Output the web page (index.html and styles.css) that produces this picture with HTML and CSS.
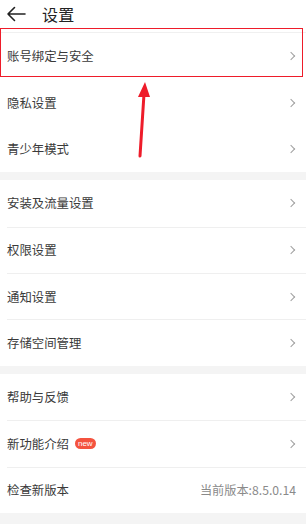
FILE: index.html
```html
<!DOCTYPE html>
<html lang="zh-CN">
<head>
<meta charset="utf-8">
<title>设置</title>
<link rel="stylesheet" href="styles.css">
</head>
<body>
<div class="page">
  <header class="topbar">
    <svg class="back" width="20" height="16" viewBox="0 0 20 16"><path d="M19 8H2M8.5 1.5L2 8l6.5 6.5" fill="none" stroke="#222" stroke-width="1.6" stroke-linecap="round" stroke-linejoin="round"/></svg>
    <h1 class="title">设置</h1>
  </header>

  <section class="group group-plain">
    <div class="row"><span class="label">账号绑定与安全</span><span class="chev"></span></div>
    <div class="row"><span class="label">隐私设置</span><span class="chev"></span></div>
    <div class="row"><span class="label">青少年模式</span><span class="chev"></span></div>
  </section>

  <section class="group">
    <div class="row"><span class="label">安装及流量设置</span><span class="chev"></span></div>
    <div class="row"><span class="label">权限设置</span><span class="chev"></span></div>
    <div class="row"><span class="label">通知设置</span><span class="chev"></span></div>
    <div class="row"><span class="label">存储空间管理</span><span class="chev"></span></div>
  </section>

  <section class="group">
    <div class="row"><span class="label">帮助与反馈</span><span class="chev"></span></div>
    <div class="row"><span class="label">新功能介绍<span class="badge">new</span></span><span class="chev"></span></div>
    <div class="row"><span class="label">检查新版本</span><span class="value">当前版本:8.5.0.14</span></div>
  </section>

  <div class="highlight"></div>
  <svg class="arrow" width="20" height="80" viewBox="0 0 20 80"><path d="M10 12L6 74" stroke="#ee1c2a" stroke-width="3" stroke-linecap="round"/><path d="M11 0L4 15L16 15Z" fill="#ee1c2a"/></svg>
</div>
</body>
</html>
```

FILE: styles.css
```css
html, body {
  margin: 0;
  padding: 0;
  background: #f4f4f4;
}
body {
  font-family: "Noto Sans CJK SC", "Noto Sans", sans-serif;
  color: #333;
}
.page {
  position: relative;
  width: 306px;
  height: 524px;
  overflow: hidden;
}
.topbar {
  height: 33px;
  background: #fff;
  border-bottom: 1px solid #f0f0f0;
  display: flex;
  align-items: flex-start;
  box-sizing: border-box;
  padding-top: 6px;
  padding-left: 6px;
}
.title {
  margin: 0 0 0 16px;
  font-size: 16px;
  font-weight: normal;
  line-height: 16px;
  color: #222;
  letter-spacing: 0.3px;
}
.group {
  background: #fff;
  margin-bottom: 8px;
  margin-top: 1px;
}
.group:first-of-type {
  margin-top: 0;
}
.row {
  height: 46.4px;
  box-sizing: border-box;
  display: flex;
  align-items: center;
  justify-content: space-between;
  margin-left: 7px;
  padding-right: 11px;
  border-top: 1px solid #efefef;
}
.row:first-child,
.group-plain .row {
  border-top: none;
}
.label {
  font-size: 12.4px;
  color: #3a3a3a;
  display: flex;
  align-items: center;
}
.chev {
  width: 5px;
  height: 5px;
  border-top: 1.2px solid #a0a0a0;
  border-right: 1.2px solid #a0a0a0;
  transform: rotate(45deg);
  margin-right: 1px;
}
.badge {
  display: inline-block;
  margin-left: 6px;
  background: #f4533f;
  color: #fff;
  font-family: "Liberation Sans", sans-serif;
  font-size: 8px;
  line-height: 11px;
  height: 11px;
  padding: 0 3px;
  border-radius: 5.5px;
}
.value {
  font-family: "Noto Sans CJK SC", "Roboto", sans-serif;
  font-size: 12.2px;
  color: #8a8a8a;
  margin-right: -1px;
}
.highlight {
  position: absolute;
  left: 0;
  top: 28px;
  width: 303px;
  height: 49px;
  box-sizing: border-box;
  border: 1.5px solid #ee1c2a;
}
.arrow {
  position: absolute;
  left: 134px;
  top: 82px;
}
```
